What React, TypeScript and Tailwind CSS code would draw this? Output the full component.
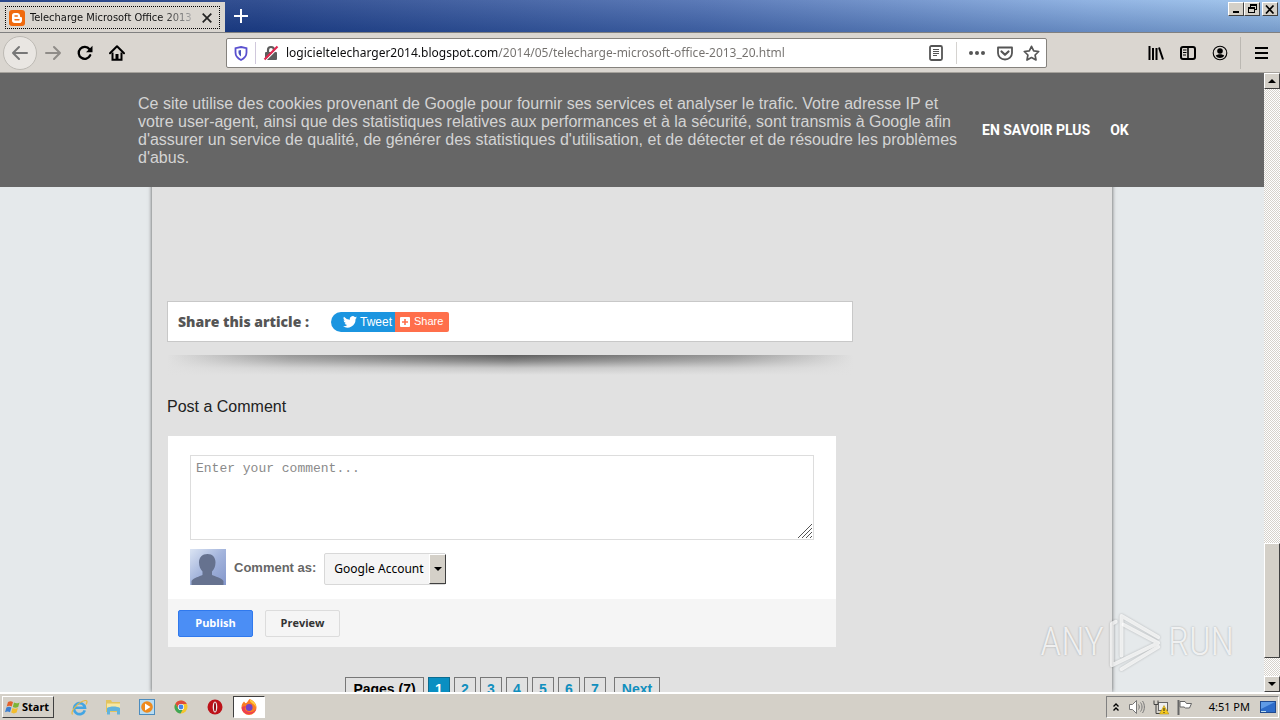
import type { ReactNode } from "react";

const URL_TEXT =
  "logicieltelecharger2014.blogspot.com/2014/05/telecharge-microsoft-office-2013_20.html";

const raised =
  "border border-t-white border-l-white border-r-[#404040] border-b-[#404040] bg-[#d4d0c8]";

function IconButton({ label, children, className = "" }: { label: string; children: ReactNode; className?: string }) {
  return (
    <button type="button" aria-label={label} className={`flex shrink-0 items-center justify-center ${className}`}>
      {children}
    </button>
  );
}

function TabStrip() {
  return (
    <header className="flex h-[33px] shrink-0 border-b border-[#808080] bg-[linear-gradient(180deg,rgba(255,255,255,0.1),rgba(20,50,110,0.28)),linear-gradient(90deg,#13337e_0%,#1c3c85_20%,#4a6cb0_55%,#85abdf_85%,#9cc3ec_100%)]">
      <div className="mt-[2px] flex w-[225px] items-center bg-[#dad6d0] px-[5px] pt-px">
        <div className="flex h-[23px] w-full items-center border border-dotted border-black pl-[3px] pr-1">
          <svg width="16" height="16" viewBox="0 0 16 16" aria-hidden="true" className="shrink-0">
            <rect width="16" height="16" rx="3" fill="#f06a0e" />
            <path d="M5.5 3h3A2.6 2.6 0 0 1 11 5.6v.6c0 .6.3.8 1 .8.6 0 1 .3 1 .9v2.3A2.8 2.8 0 0 1 10.200 13H5.700A2.700 2.700 0 0 1 3 10.300V5.500A2.500 2.500 0 0 1 5.500 3z" fill="#fff" />
            <path d="M6 6h2.300M6 9.800h4" stroke="#f06a0e" strokeWidth="1.400" strokeLinecap="round" />
          </svg>
          <span className="ml-[5px] whitespace-nowrap bg-[linear-gradient(90deg,#111_130px,#aaa_162px)] bg-clip-text font-['DejaVu_Sans_Condensed',sans-serif] text-[11px] leading-4 text-transparent">
            Telecharge Microsoft Office 2013
          </span>
          <IconButton label="Close tab" className="ml-auto size-4">
            <svg width="10" height="10" viewBox="0 0 10 10"><path d="M.7.7l8.600 8.600M9.300.7L.7 9.300" stroke="#222" strokeWidth="1.700" /></svg>
          </IconButton>
        </div>
      </div>
      <IconButton label="New tab" className="w-8">
        <svg width="14" height="14" viewBox="0 0 14 14"><path d="M7 0v14M0 7h14" stroke="#fff" strokeWidth="2" /></svg>
      </IconButton>
      <div className="ml-auto mr-[2px] mt-[2px] flex items-start">
        <IconButton label="Minimize" className={`h-[14px] w-4 ${raised}`}>
          <svg width="12" height="10" viewBox="0 0 12 10"><path d="M3 8h6" stroke="#000" strokeWidth="2" /></svg>
        </IconButton>
        <IconButton label="Restore" className={`h-[14px] w-4 ${raised}`}>
          <svg width="12" height="10" viewBox="0 0 12 10" shapeRendering="crispEdges" fill="none" stroke="#000">
            <path d="M4 1h6M4.500 1v3M4 .500h6v5H8M2 3.500h6v5H2zM2 4.500h6" />
          </svg>
        </IconButton>
        <IconButton label="Close" className={`ml-[2px] h-[14px] w-4 ${raised}`}>
          <svg width="10" height="9" viewBox="0 0 10 9"><path d="M1 .5l7.500 8M8.500.5L1 8.500" stroke="#000" strokeWidth="1.700" /></svg>
        </IconButton>
      </div>
    </header>
  );
}

function Toolbar() {
  return (
    <div className="flex h-10 shrink-0 items-center border-b border-[#a5a29c] bg-[#dad6d0] pt-px">
      <IconButton label="Back" className="ml-[3px] size-[34px] rounded-full border border-[#bdbab4] bg-[#e9e6e2]">
        <svg width="18" height="16" viewBox="0 0 18 16" fill="none" stroke="#777" strokeWidth="2" strokeLinecap="round" strokeLinejoin="round"><path d="M16 8H2M8 2L2 8l6 6" /></svg>
      </IconButton>
      <IconButton label="Forward" className="w-8">
        <svg width="18" height="16" viewBox="0 0 18 16" fill="none" stroke="#8f8c88" strokeWidth="2" strokeLinecap="round" strokeLinejoin="round"><path d="M2 8h14M10 2l6 6-6 6" /></svg>
      </IconButton>
      <IconButton label="Reload" className="w-8">
        <svg width="16" height="16" viewBox="0 0 16 16"><path d="M13.200 10.300A6 6 0 1 1 12.500 4.200" fill="none" stroke="#000" strokeWidth="2.300" strokeLinecap="round" /><path d="M15.500 .8v6.400H9z" fill="#000" /></svg>
      </IconButton>
      <IconButton label="Home" className="w-8">
        <svg width="16" height="16" viewBox="0 0 16 16"><path d="M1 8.300L8 1.300l7 7" fill="none" stroke="#000" strokeWidth="2" strokeLinecap="round" strokeLinejoin="round" /><path d="M3.500 7.500v7.300h9V7.500" fill="none" stroke="#000" strokeWidth="2" /><path d="M6.500 9h3v6h-3z" fill="#000" /></svg>
      </IconButton>
      <div className="ml-[93px] flex h-[30px] w-[821px] shrink items-center rounded-[2px] border border-[#85827d] bg-white pl-[6px] pr-[5px]">
        <IconButton label="Tracking protection" className="w-4">
          <svg width="14" height="15" viewBox="0 0 14 15"><path d="M7 1l5.500 1.200v4.300c0 3.500-2 5.800-5.500 7.500-3.500-1.700-5.500-4-5.500-7.500V2.200z" fill="none" stroke="#5a50cf" strokeWidth="1.800" /><path d="M7 4v6.500C5.200 9.300 4.500 8 4.500 6.500v-2z" fill="#4a55c0" /></svg>
        </IconButton>
        <span className="mx-[6px] h-[22px] w-px bg-[#d0c8dc]" />
        <IconButton label="Connection not secure" className="w-[18px]">
          <svg width="16" height="16" viewBox="0 0 16 16"><rect x="2" y="7" width="12" height="8" rx="1" fill="#5c5c5c" /><path d="M5 7.500V5a3 3 0 0 1 6 0v2.500" fill="none" stroke="#5c5c5c" strokeWidth="2.200" /><path d="M2.500 15.500L15 3" stroke="#fff" strokeWidth="1.200" /><path d="M1.500 14.500l13-13" stroke="#e22850" strokeWidth="2.200" /></svg>
        </IconButton>
        <input
          aria-label="Address"
          defaultValue={URL_TEXT}
          className="ml-[6px] min-w-0 flex-1 bg-[linear-gradient(90deg,#0c0c0d_212px,#73706d_212px)] bg-clip-text font-['Noto_Sans',sans-serif] text-[12px] leading-5 text-transparent outline-none"
        />
        <IconButton label="Reader view" className="w-6">
          <svg width="14" height="16" viewBox="0 0 14 16" fill="none" stroke="#555"><rect x="1" y="1" width="12" height="14" rx="1.500" strokeWidth="1.800" /><path d="M4 4.500h6M4 6.500h6M4 8.500h6M4 10.500h4" /></svg>
        </IconButton>
        <span className="mx-2 h-[22px] w-px bg-[#d5d3d0]" />
        <IconButton label="Page actions" className="w-6">
          <svg width="16" height="4" viewBox="0 0 16 4" fill="#555"><circle cx="2" cy="2" r="2" /><circle cx="8" cy="2" r="2" /><circle cx="14" cy="2" r="2" /></svg>
        </IconButton>
        <IconButton label="Save to Pocket" className="ml-1 w-6">
          <svg width="16" height="15" viewBox="0 0 16 15" fill="none" stroke="#555" strokeWidth="1.800" strokeLinecap="round" strokeLinejoin="round"><path d="M1 1.500h14V7a7 6.500 0 0 1-14 0z" /><path d="M4.500 5.500L8 8.800l3.500-3.300" strokeWidth="2.200" /></svg>
        </IconButton>
        <IconButton label="Bookmark" className="ml-1 w-5">
          <svg width="17" height="16" viewBox="0 0 17 16" fill="none" stroke="#555" strokeWidth="1.700" strokeLinejoin="round"><path d="M8.500 1.300l2.200 4.500 5 .7-3.600 3.500.9 5-4.500-2.400L4 15l.9-5L1.300 6.500l5-.7z" /></svg>
        </IconButton>
      </div>
      <div className="ml-auto flex items-center">
        <IconButton label="Library" className="w-8">
          <svg width="16" height="14" viewBox="0 0 16 14" stroke="#000" strokeWidth="2"><path d="M1.500 0v14M5 2v12M8.500 2v12M11 1.500l4 12" /></svg>
        </IconButton>
        <IconButton label="Sidebars" className="w-8">
          <svg width="16" height="14" viewBox="0 0 16 14" fill="none" stroke="#000"><rect x="1" y="1" width="14" height="12" rx="2" strokeWidth="2" /><path d="M8 1v12" strokeWidth="1.600" /><path d="M3 4h3.500M3 6.500h3.500M3 9h3" /></svg>
        </IconButton>
        <IconButton label="Account" className="w-8">
          <svg width="16" height="16" viewBox="0 0 16 16"><circle cx="8" cy="8" r="6.800" fill="none" stroke="#000" strokeWidth="1.100" /><circle cx="8" cy="6" r="2.800" /><path d="M3.800 10.800c1.500-2 7-2 8.400 0-1 1.500-2.600 2.200-4.200 2.200s-3.200-.7-4.200-2.200z" /></svg>
        </IconButton>
        <span className="ml-1 h-8 w-px bg-[#bbb8b2]" />
        <IconButton label="Menu" className="mr-[3px] w-9 pl-1">
          <svg width="13" height="12" viewBox="0 0 13 12" stroke="#000" strokeWidth="2"><path d="M0 1h13M0 6h13M0 11h13" /></svg>
        </IconButton>
      </div>
    </div>
  );
}

function CookieBanner() {
  return (
    <section aria-label="Cookies" className="absolute inset-x-0 top-0 flex h-[114px] justify-center bg-[#666] font-['Liberation_Sans',sans-serif] text-white">
      <div className="flex w-[988px] items-center">
        <p className="w-[824px] shrink-0 pt-[2px] text-[16px] leading-[18px] text-[#d4d4d4]">
          Ce site utilise des cookies provenant de Google pour fournir ses services et analyser le trafic. Votre adresse IP et votre user-agent, ainsi que des statistiques relatives aux performances et à la sécurité, sont transmis à Google afin d'assurer un service de qualité, de générer des statistiques d'utilisation, et de détecter et de résoudre les problèmes d'abus.
        </p>
        <a href="#savoir" className="ml-5 whitespace-nowrap font-['Roboto',sans-serif] text-[14px] font-bold">EN SAVOIR PLUS</a>
        <a href="#ok" className="ml-5 font-['Roboto',sans-serif] text-[14px] font-bold">OK</a>
      </div>
    </section>
  );
}

function ShareBox() {
  return (
    <div className="flex h-[41px] w-[686px] items-center border border-[#c8c8c8] bg-white px-[10px]">
      <h2 className="w-[153px] font-['Open_Sans','Liberation_Sans',sans-serif] text-[14px] font-extrabold text-[#555]">Share this article :</h2>
      <a href="#tweet" className="flex h-5 w-16 items-center rounded-l-full bg-[#1b95e0] pl-3 font-['Liberation_Sans',sans-serif] text-[12px] text-white">
        <svg width="14" height="12" viewBox="0 0 24 20" fill="#fff" aria-hidden="true" className="mr-[3px] shrink-0"><path d="M24 2.400a10 10 0 0 1-2.800.8A5 5 0 0 0 23.300.4a10 10 0 0 1-3.100 1.200 4.900 4.900 0 0 0-8.400 4.500A14 14 0 0 1 1.700.9a4.900 4.900 0 0 0 1.500 6.600 5 5 0 0 1-2.200-.6 4.900 4.900 0 0 0 3.900 4.900 5 5 0 0 1-2.200.1 4.900 4.900 0 0 0 4.600 3.400A9.900 9.900 0 0 1 0 17.400 14 14 0 0 0 21.500 5z" /></svg>
        Tweet
      </a>
      <a href="#share" className="flex h-5 w-[54px] items-center rounded-r-[2px] bg-[#ff6f4b] pl-[5px] font-['Liberation_Sans',sans-serif] text-[11px] text-white">
        <svg width="10" height="10" viewBox="0 0 10 10" aria-hidden="true" className="mr-1 shrink-0"><rect width="10" height="10" rx="1" fill="#fff" /><path d="M5 2v6M2 5h6" stroke="#ff6f4b" strokeWidth="1.600" /></svg>
        Share
      </a>
    </div>
  );
}

function CommentForm() {
  return (
    <form className="ml-px mt-[19px] w-[668px] bg-white font-['Liberation_Sans',sans-serif]">
      <div className="px-[22px] pt-[19px]">
        <div className="relative">
          <textarea
            aria-label="Comment"
            placeholder="Enter your comment..."
            className="block h-[85px] w-full resize-none border border-[#ddd] bg-white px-[5px] py-[5px] font-['Liberation_Mono',monospace] text-[13px] leading-4 text-black outline-none placeholder:text-[#8a8a8a]"
          />
          <svg width="14" height="14" viewBox="0 0 14 14" aria-hidden="true" className="pointer-events-none absolute bottom-[2px] right-[2px]" stroke="#555"><path d="M0 14L14 0M4 14L14 4M8 14l6-6M12 14l2-2" /></svg>
        </div>
        <div className="flex items-center pb-[14px] pt-[9px]">
          <svg width="36" height="36" viewBox="0 0 36 36" aria-hidden="true">
            <defs><linearGradient id="avatar" x1="0" y1="0" x2="1" y2="1"><stop stopColor="#dbe4f3" /><stop offset=".5" stopColor="#a3b4dc" /><stop offset="1" stopColor="#8497cb" /></linearGradient></defs>
            <rect width="36" height="36" fill="url(#avatar)" />
            <path d="M17.500 5c5 0 8 3.300 8 8.300 0 4-1.500 7.500-3.500 9.200v3.500c3 1.500 9 2.500 11.500 6V36h-32v-4c2.500-3.500 8-4.500 11-6v-3.500c-2-1.700-3.500-5.200-3.500-9.200 0-5 3.300-8.300 8.500-8.300z" fill="#66728f" />
          </svg>
          <label htmlFor="identity" className="ml-2 mt-[2px] text-[13px] font-bold text-[#666]">Comment as:</label>
          <div className="relative ml-2 mt-1 flex h-8">
            <select id="identity" className="block h-8 w-[122px] appearance-none rounded-[2px] border border-[#d8d8d8] bg-[#f5f5f5] pl-[9px] font-['Noto_Sans',sans-serif] text-[12px] text-black">
              <option>Google Account</option>
            </select>
            <span className={`pointer-events-none absolute right-0 top-px flex h-[30px] w-[17px] items-center justify-center ${raised}`}>
              <svg width="8" height="4" viewBox="0 0 8 4"><path d="M0 0h8L4 4z" /></svg>
            </span>
          </div>
        </div>
      </div>
      <div className="flex h-12 items-center gap-3 bg-[#f5f5f5] px-[10px] font-['Open_Sans','Liberation_Sans',sans-serif] text-[11px] font-bold">
        <button type="button" className="h-[27px] w-[75px] rounded-[2px] border border-[#3079ed] bg-[#4b8ef5] text-white">Publish</button>
        <button type="button" className="h-[27px] w-[75px] rounded-[2px] border border-[#dcdcdc] bg-[#f5f5f5] text-[#333]">Preview</button>
      </div>
    </form>
  );
}

function Pagination() {
  return (
    <nav aria-label="Pages" className="ml-[178px] mt-[30px] flex h-[22px] gap-1 font-['Liberation_Sans',sans-serif] text-[14px] font-bold leading-[22px] text-[#118fbe]">
      <span className="w-[79px] border border-[#777] text-center text-black">Pages (7)</span>
      {[1, 2, 3, 4, 5, 6, 7].map((page) => (
        <a key={page} href={`#page-${page}`} className={`w-[22px] border text-center ${page === 1 ? "border-[#0c6c90] bg-[#0a8fc2] text-white" : "border-[#777]"}`}>
          {page}
        </a>
      ))}
      <a href="#next" className="ml-1 w-[46px] border border-[#777] text-center">Next</a>
    </nav>
  );
}

function PageScrollbar() {
  return (
    <div aria-hidden="true" className="flex w-4 shrink-0 flex-col bg-[repeating-conic-gradient(#d6d2cb_0_25%,#ffffff_0_50%)] bg-[length:2px_2px]">
      <span className={`flex h-4 items-center justify-center ${raised}`}><svg width="8" height="4" viewBox="0 0 8 4"><path d="M0 4h8L4 0z" /></svg></span>
      <span className="flex-1" />
      <span className={`h-[115px] ${raised}`} />
      <span className="h-[18px]" />
      <span className={`flex h-4 items-center justify-center ${raised}`}><svg width="8" height="4" viewBox="0 0 8 4"><path d="M0 0h8L4 4z" /></svg></span>
    </div>
  );
}

function Watermark() {
  return (
    <div className="pointer-events-none absolute bottom-[42px] right-[46px] flex items-center gap-1 font-['Roboto_Condensed',sans-serif] text-[38px] font-light leading-[72px] text-white/80 [text-shadow:0_0_2px_rgba(0,0,0,0.3)]">
      <span>ANY</span>
      <svg width="56" height="66" viewBox="0 0 58 66" fill="none" stroke="#fff" strokeOpacity=".75" strokeWidth="4" strokeLinecap="round" strokeLinejoin="round" className="drop-shadow-[0_0_1px_rgba(0,0,0,0.3)]">
        <path d="M14 47V6l38 22" />
        <path d="M8 12l-4 2v43l48-23-36-19" />
        <path d="M14 61l38-23" />
      </svg>
      <span>RUN</span>
    </div>
  );
}

function Taskbar() {
  return (
    <footer className="flex h-7 shrink-0 items-center border-t-2 border-white bg-[#d4d0c8] font-['Noto_Sans',sans-serif] text-[11px] text-black">
      <button type="button" className={`ml-[2px] flex h-[22px] w-[52px] items-center gap-px pl-[2px] font-bold ${raised}`}>
        <svg width="16" height="15" viewBox="0 0 16 15" aria-hidden="true" className="shrink-0">
          <path d="M3 2c2-1.200 3.500-1 5 0L6.700 6.500c-1.600-1-3.200-1-5 0z" fill="#e3612b" />
          <path d="M9 2.400c1.500 1 3.300 1.200 5.500 0L13.200 7c-2 1.100-3.800 1-5.400 0z" fill="#7cb436" />
          <path d="M1.400 7.500c1.800-1 3.400-1 5 0L5 12.200c-1.500-1-3.200-1-5 0z" fill="#3c7fd0" />
          <path d="M7.500 8c1.600 1 3.400 1.100 5.400 0l-1.300 4.600c-2 1.100-3.800 1-5.400 0z" fill="#f3bd2c" />
        </svg>
        Start
      </button>
      <div className="ml-2 flex items-center">
        <IconButton label="Internet Explorer" className="w-[34px]">
          <svg width="17" height="17" viewBox="0 0 17 17" fill="none"><path d="M13.800 11.300A5.500 5.500 0 1 1 14 8.800H4" stroke="#43a5e3" strokeWidth="2.600" /><path d="M1.500 15.500C-1 12 8 2.500 14 1.500c3-.3 2 2.500 1 4" stroke="#e6b944" strokeWidth="1.200" /></svg>
        </IconButton>
        <IconButton label="Explorer" className="w-[34px]">
          <svg width="17" height="16" viewBox="0 0 17 16"><path d="M1 1h5l1 2h8v10H1z" fill="#e3c45f" /><path d="M2 4.500h13v5H2z" fill="#f7e7a3" /><path d="M2 9c3-2 10-2 13 0v6.500h-3V12H5v3.500H2z" fill="#62b3dc" /></svg>
        </IconButton>
        <IconButton label="Media Player" className="w-[34px]">
          <svg width="16" height="16" viewBox="0 0 16 16"><rect x=".5" y=".5" width="15" height="15" fill="#b8dcf2" stroke="#4c8cbe" /><circle cx="8" cy="8" r="5.800" fill="#ee8a1d" /><path d="M6 4.500v7L11.500 8z" fill="#fff" /></svg>
        </IconButton>
        <IconButton label="Chrome" className="w-[34px]">
          <svg width="14" height="14" viewBox="0 0 14 14"><circle cx="7" cy="7" r="6.500" fill="#f5c52d" /><path d="M1.400 3.700A6.500 6.500 0 0 1 12.800 4H7L4.300 8.500z" fill="#df4b3c" /><path d="M1.400 3.700L4.500 9l4 1-2 3.500A6.500 6.500 0 0 1 1.400 3.700z" fill="#3fa657" /><circle cx="7" cy="7" r="3.100" fill="#fff" /><circle cx="7" cy="7" r="2.400" fill="#4584e8" /></svg>
        </IconButton>
        <IconButton label="Opera" className="w-[34px]">
          <svg width="16" height="16" viewBox="0 0 16 16"><circle cx="8" cy="8" r="7.500" fill="#bd1219" /><ellipse cx="8" cy="8" rx="2.300" ry="5.500" fill="#eee" /><ellipse cx="8" cy="8" rx="1" ry="4.500" fill="#8c0b10" /></svg>
        </IconButton>
        <IconButton label="Firefox" className="ml-px h-[22px] w-8 border border-t-[#404040] border-l-[#404040] border-r-white border-b-white bg-white">
          <svg width="16" height="16" viewBox="0 0 16 16"><path d="M8.500 0c3 1 7 4 7 8.500a7.400 7.400 0 0 1-15 0C.5 5.500 1.500 4 3 2.500l1.500 1.800C6.500 4 6.500 2 8.500 0z" fill="#fb7c24" /><path d="M9 .5c4 1.500 6.500 5 6 8-.5-2-2-3-3.500-4C10 3.500 8.500 2.500 9 .5z" fill="#ffcf3a" /><circle cx="8.200" cy="8.500" r="3.400" fill="#7443c5" /><path d="M.6 8.500c.4 9 14 9 14.800.5-1 4-6 5-9 3.500S3 9 5.500 7.500C3.500 7 2 7 .6 8.500z" fill="#ee3f50" /></svg>
        </IconButton>
      </div>
      <div className="ml-auto mr-px flex h-[22px] items-center border border-t-[#808080] border-l-[#808080] border-r-white border-b-white pl-[6px] pr-[2px]">
        <IconButton label="Show hidden icons" className="w-[6px]">
          <svg width="6" height="8" viewBox="0 0 6 8" fill="none" stroke="#000" strokeWidth="1.400"><path d="M.5 3.500L3 1l2.500 2.500M.5 7.500L3 5l2.500 2.500" /></svg>
        </IconButton>
        <IconButton label="Volume" className="ml-[10px] w-4">
          <svg width="16" height="14" viewBox="0 0 16 14" fill="#fff" stroke="#777"><path d="M.5 4.500h3l4-4v13l-4-4h-3z" /><path d="M9.500 4.500c1 1.500 1 3.500 0 5M11.500 2.500c2 2.500 2 6.500 0 9M13.500 1c2.500 3.500 2.500 8.500 0 12" fill="none" /></svg>
        </IconButton>
        <IconButton label="Network" className="ml-2 w-4">
          <svg width="16" height="15" viewBox="0 0 16 15"><rect x="5.500" y="2.500" width="9" height="8" fill="#eee" stroke="#666" /><path d="M1 .5v4h4v-4M3 4.500v9h5" fill="none" stroke="#444" /><path d="M11 5.500L15.800 14H6.500z" fill="#f6c91f" stroke="#a98600" strokeWidth=".5" /><path d="M11 8v3M11 12v1" stroke="#222" /></svg>
        </IconButton>
        <IconButton label="Action Center" className="ml-2 w-4">
          <svg width="16" height="15" viewBox="0 0 16 15" fill="#fff" stroke="#666"><path d="M1.500 0v15" strokeWidth="2" /><path d="M3 1.500h5l1.500 2h5l-2 4.500h-4L7 7H3z" /></svg>
        </IconButton>
        <time className="ml-4 whitespace-nowrap">4:51 PM</time>
        <IconButton label="Show desktop" className="ml-[10px] w-4">
          <svg width="16" height="13" viewBox="0 0 16 13"><rect x=".5" y=".5" width="15" height="11" fill="#2d6cc9" stroke="#1f4a8f" /><path d="M1 1h14L1 8z" fill="#5f9be6" /><path d="M1 10.500h5" stroke="#bde" /></svg>
        </IconButton>
      </div>
    </footer>
  );
}

export default function App() {
  return (
    <div className="relative flex h-screen flex-col overflow-hidden">
      <TabStrip />
      <Toolbar />
      <div className="flex min-h-0 flex-1">
        <main className="relative min-w-0 flex-1 overflow-hidden bg-[#e5e9eb]">
          <div className="mx-auto h-full max-w-[960px] bg-[#e1e1e1] pl-[15px] pt-[228px] shadow-[0_0_4px_rgba(0,0,0,0.65)]">
            <ShareBox />
            <div className="mt-[13px] h-5 w-[686px] bg-[linear-gradient(180deg,rgba(225,225,225,0)_0%,rgba(225,225,225,0.3)_30%,rgba(225,225,225,0.8)_65%,#e1e1e1_100%),linear-gradient(90deg,#e1e1e1_0%,#989898_18%,#5c5c5c_50%,#989898_82%,#e1e1e1_100%)]" />
            <h3 className="mt-[22px] font-['Liberation_Sans',sans-serif] text-[16px] leading-5 text-[#222]">Post a Comment</h3>
            <CommentForm />
            <Pagination />
          </div>
          <CookieBanner />
        </main>
        <PageScrollbar />
      </div>
      <Taskbar />
      <Watermark />
    </div>
  );
}
